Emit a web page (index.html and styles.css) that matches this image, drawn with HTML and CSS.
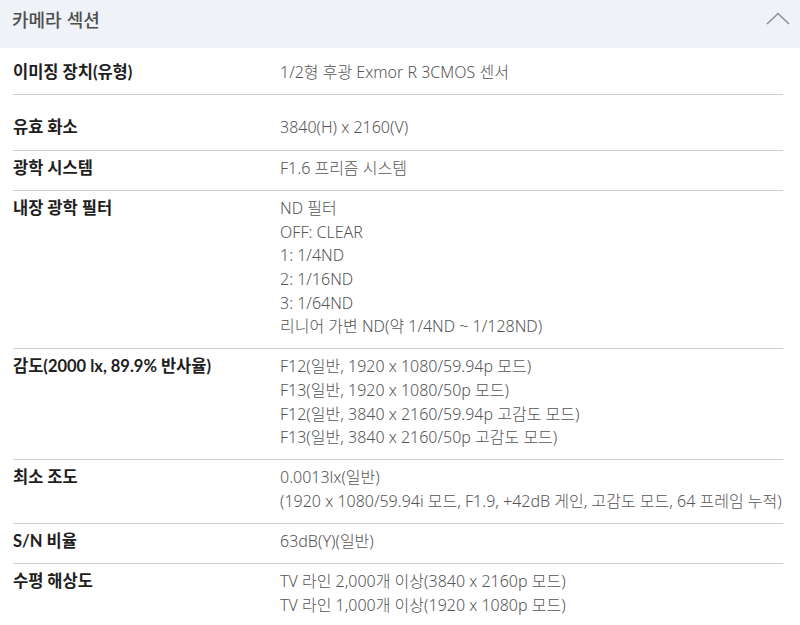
FILE: index.html
```html
<!DOCTYPE html>
<html lang="ko">
<head>
<meta charset="utf-8">
<link rel="stylesheet" href="styles.css">
</head>
<body>
<section class="spec">
  <header class="spec-head">
    <h2 class="spec-title">카메라 섹션</h2>
    <svg class="chevron" width="24" height="13" viewBox="0 0 24 13"><path d="M1 12 L12 1.5 L23 12" fill="none" stroke="#8a8f98" stroke-width="1.6"/></svg>
  </header>
  <div class="rows">
    <div class="row first">
      <div class="label">이미징 장치(유형)</div>
      <div class="value"><p>1/2형 후광 Exmor R 3CMOS 센서</p></div>
    </div>
    <div class="row second">
      <div class="label">유효 화소</div>
      <div class="value"><p>3840(H) x 2160(V)</p></div>
    </div>
    <div class="row">
      <div class="label">광학 시스템</div>
      <div class="value"><p>F1.6 프리즘 시스템</p></div>
    </div>
    <div class="row">
      <div class="label">내장 광학 필터</div>
      <div class="value">
        <p>ND 필터</p>
        <p>OFF: CLEAR</p>
        <p>1: 1/4ND</p>
        <p>2: 1/16ND</p>
        <p>3: 1/64ND</p>
        <p>리니어 가변 ND(약 1/4ND ~ 1/128ND)</p>
      </div>
    </div>
    <div class="row">
      <div class="label">감도(2000 lx, 89.9% 반사율)</div>
      <div class="value">
        <p>F12(일반, 1920 x 1080/59.94p 모드)</p>
        <p>F13(일반, 1920 x 1080/50p 모드)</p>
        <p>F12(일반, 3840 x 2160/59.94p 고감도 모드)</p>
        <p>F13(일반, 3840 x 2160/50p 고감도 모드)</p>
      </div>
    </div>
    <div class="row">
      <div class="label">최소 조도</div>
      <div class="value">
        <p>0.0013lx(일반)</p>
        <p>(1920 x 1080/59.94i 모드, F1.9, +42dB 게인, 고감도 모드, 64 프레임 누적)</p>
      </div>
    </div>
    <div class="row">
      <div class="label">S/N 비율</div>
      <div class="value"><p>63dB(Y)(일반)</p></div>
    </div>
    <div class="row">
      <div class="label">수평 해상도</div>
      <div class="value">
        <p>TV 라인 2,000개 이상(3840 x 2160p 모드)</p>
        <p>TV 라인 1,000개 이상(1920 x 1080p 모드)</p>
      </div>
    </div>
  </div>
</section>
</body>
</html>
```

FILE: styles.css
```css
html, body {
  margin: 0;
  padding: 0;
  background: #ffffff;
}
body {
  font-family: "Noto Sans", "Noto Sans CJK KR", sans-serif;
}
.spec-head {
  height: 48px;
  background: #eff2f7;
  display: flex;
  align-items: center;
  justify-content: space-between;
  padding: 0 10px 0 12px;
}
.spec-title {
  margin: 0;
  font-size: 18px;
  font-weight: 500;
  color: #4f4f4f;
  font-family: "Noto Sans CJK KR", sans-serif;
  position: relative;
  top: -5px;
}
.chevron {
  position: relative;
  top: -6px;
}
.rows {
  margin: 0 17px 0 13px;
}
.row {
  display: grid;
  grid-template-columns: 267px 1fr;
  padding: 6px 0 9.5px;
  border-bottom: 1px solid #cdcdcd;
}
.row:last-child {
  border-bottom: none;
}
.row.first {
  padding-top: 13px;
}
.row.second {
  padding-top: 21px;
  padding-bottom: 10.5px;
}
.label {
  font-family: "Lato", "Noto Sans CJK KR", sans-serif;
  font-weight: 700;
  font-size: 16.5px;
  line-height: 23.6px;
  color: #1e1e1e;
}
.value p {
  margin: 0;
  font-family: "Noto Sans", "Noto Sans CJK KR", sans-serif;
  font-weight: 300;
  font-size: 16px;
  line-height: 23.6px;
  color: #555555;
}
```
